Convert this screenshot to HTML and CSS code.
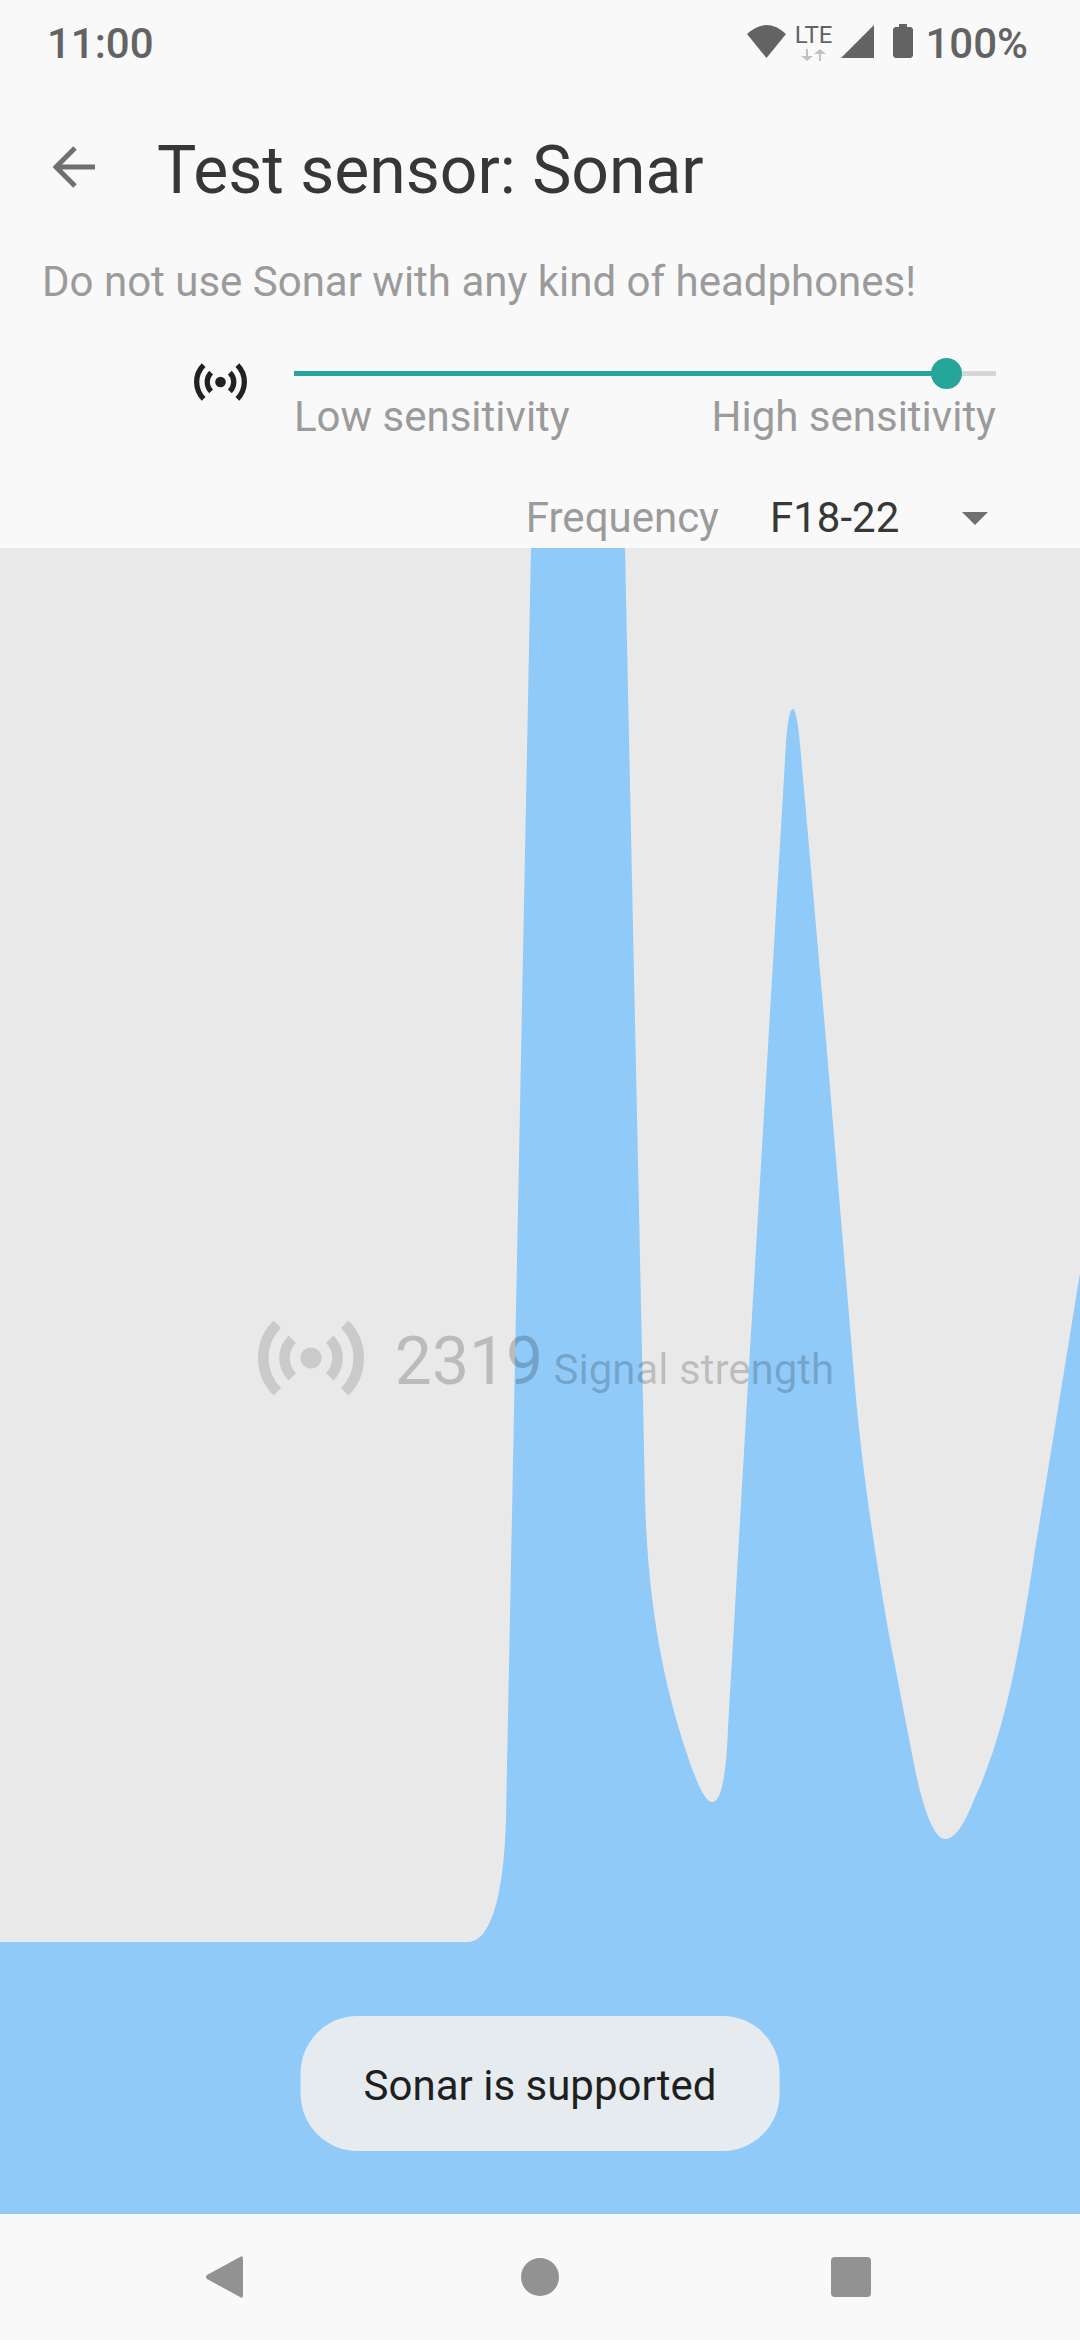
FILE: index.html
```html
<!DOCTYPE html>
<html lang="en">
<head>
<meta charset="utf-8">
<meta name="viewport" content="width=device-width, initial-scale=1">
<title>Test sensor: Sonar</title>
<link rel="stylesheet" href="styles.css">
</head>
<body>
<div class="screen">
  <div class="status-bar">
    <span>11:00</span>
    <div class="status-icons">
      <svg class="wifi" width="39" height="33" viewBox="0 0 39 33" aria-hidden="true"><path d="M0 9Q19.500-9 39 9L19.500 33Z"/></svg>
      <div class="network">
        <span class="network-type">LTE</span>
        <svg width="25" height="12" viewBox="0 0 25 12" aria-hidden="true"><path d="M5 0h2v7h5l-6 5-6-5h5zM18 12h2V5h5l-6-5-6 5h5z"/></svg>
      </div>
      <svg class="signal" width="33" height="33" viewBox="0 0 33 33" aria-hidden="true"><path d="M33 0V33H0Z"/></svg>
      <svg class="battery" width="20" height="34" viewBox="0 0 20 34" aria-hidden="true"><path d="M6 0h8v3h4l2 2v27l-2 2H2l-2-2V5l2-2h4z"/></svg>
      <span>100%</span>
    </div>
  </div>

  <header class="app-bar">
    <button class="back" type="button" aria-label="Back">
      <svg width="42" height="42" viewBox="0 0 42 42" aria-hidden="true"><path d="M42 21H4M22 2L3 21L22 40" fill="none" stroke="currentColor" stroke-width="5"/></svg>
    </button>
    <h1>Test sensor: Sonar</h1>
  </header>

  <main class="content">
    <p class="warning">Do not use Sonar with any kind of headphones!</p>

    <div class="sensitivity">
      <svg class="sonar-icon" viewBox="-5 -4 10 8" aria-hidden="true">
        <circle r="1" fill="currentColor"/>
        <path d="M-1.768-1.768A2.500 2.500 0 0 0-1.768 1.768M1.768-1.768A2.500 2.500 0 0 1 1.768 1.768M-3.182-3.182A4.500 4.500 0 0 0-3.182 3.182M3.182-3.182A4.500 4.500 0 0 1 3.182 3.182" fill="none" stroke="currentColor"/>
      </svg>
      <div class="slider">
        <input type="range" min="0" max="100" value="95" aria-label="Sensitivity">
        <div class="slider-labels"><span>Low sensitivity</span><span>High sensitivity</span></div>
      </div>
    </div>

    <div class="frequency">
      <label for="frequency">Frequency</label>
      <div class="spinner">
        <select id="frequency"><option>F18-22</option></select>
        <svg width="26" height="13" viewBox="0 0 26 13" aria-hidden="true"><path d="M0 0H26L13 13Z"/></svg>
      </div>
    </div>

    <section class="chart">
      <svg class="curve" viewBox="0 0 1080 1666" preserveAspectRatio="none" aria-hidden="true">
        <path d="M0 1394H468C490 1394 504 1350 506 1270L531 0H625L643 852L645 950C648 1070 668 1150 688 1209Q703 1254 712 1254C720 1254 726 1235 728 1180L747 852L786 195C788 170 790 161 793 161C796 161 799 180 802 219L826 492L855 839C862 922 877 1020 890 1092L912 1206C921 1255 933 1291 945 1291C957 1291 967 1270 976 1247C1004 1187 1020 1103 1035 1002L1080 725V1666H0Z"/>
      </svg>
      <div class="reading">
        <svg class="sonar-icon" viewBox="-5 -4 10 8" aria-hidden="true">
          <circle r="1" fill="currentColor"/>
          <path d="M-1.768-1.768A2.500 2.500 0 0 0-1.768 1.768M1.768-1.768A2.500 2.500 0 0 1 1.768 1.768M-3.182-3.182A4.500 4.500 0 0 0-3.182 3.182M3.182-3.182A4.500 4.500 0 0 1 3.182 3.182" fill="none" stroke="currentColor"/>
        </svg>
        <p><span class="value">2319</span> Signal strength</p>
      </div>
      <div class="toast" role="status">Sonar is supported</div>
    </section>
  </main>

  <nav class="nav-bar">
    <button type="button" aria-label="Back"><svg class="nav-back" width="45" height="42" viewBox="0 0 45 42" aria-hidden="true"><path d="M34 1Q37-1 37 3V39Q37 43 34 41L1 23Q-1 21 1 19Z"/></svg></button>
    <button type="button" aria-label="Home"><svg width="38" height="38" viewBox="0 0 38 38" aria-hidden="true"><circle cx="19" cy="19" r="19"/></svg></button>
    <button type="button" aria-label="Overview"><svg width="40" height="40" viewBox="0 0 40 40" aria-hidden="true"><rect width="40" height="40" rx="4"/></svg></button>
  </nav>
</div>
</body>
</html>
```
FILE: styles.css
```css
* {
  box-sizing: border-box;
}

body {
  margin: 0;
  background: #f9f9f9;
  color: #9b9b9b;
  font: 42px/56px Roboto, sans-serif;
}

h1,
p {
  margin: 0;
}

svg {
  display: block;
  flex: none;
  fill: currentColor;
}

button {
  display: grid;
  place-items: center;
  padding: 0;
  border: 0;
  background: none;
  color: inherit;
}

.screen {
  display: flex;
  flex-direction: column;
  min-height: 100vh;
}

.status-bar {
  display: flex;
  justify-content: space-between;
  align-items: center;
  height: 88px;
  padding: 0 52px 0 47px;
  color: #636363;
  font-weight: 500;
}

.status-icons {
  display: flex;
  align-items: center;
}

.wifi,
.signal,
.battery {
  margin-bottom: 6px;
}

.network {
  display: flex;
  flex-direction: column;
  align-items: center;
  gap: 2px;
  margin: 0 9px;
  padding-bottom: 4px;
}

.network svg {
  color: #c2c2c2;
}

.network-type {
  font-size: 24px;
  font-weight: 400;
  line-height: 24px;
}

.battery {
  margin-left: 19px;
  margin-right: 12px;
}

.app-bar {
  display: flex;
  align-items: center;
  gap: 62px;
  height: 166px;
  padding: 0 53px;
  color: #373737;
}

.app-bar h1 {
  font-size: 66px;
  font-weight: 400;
  line-height: 80px;
}

.back {
  margin-bottom: 8px;
  color: #707070;
}

.content {
  display: flex;
  flex: 1;
  flex-direction: column;
}

.warning {
  padding: 0 42px;
}

.sensitivity {
  display: flex;
  gap: 47px;
  padding: 48px 84px 0 194px;
}

.sensitivity .sonar-icon {
  width: 53px;
  height: 48px;
  color: #212121;
}

.slider {
  flex: 1;
}

.slider input {
  display: block;
  width: 100%;
  height: 31px;
  margin: 0;
  appearance: none;
  background: linear-gradient(90deg, #26a69a 93%, #d6d6d6 93%) center / 100% 5px no-repeat;
}

.slider input::-webkit-slider-thumb {
  width: 31px;
  height: 31px;
  appearance: none;
  border-radius: 50%;
  background: #26a69a;
}

.slider-labels {
  display: flex;
  justify-content: space-between;
}

.frequency {
  display: flex;
  justify-content: flex-end;
  align-items: center;
  gap: 51px;
  height: 60px;
  margin-top: 43px;
  padding-right: 84px;
}

.spinner {
  display: grid;
  align-items: center;
  width: 226px;
  color: #707070;
}

.spinner select,
.spinner svg {
  grid-area: 1 / 1;
}

.spinner select {
  width: 100%;
  padding: 0;
  border: 0;
  appearance: none;
  background: none;
  color: #373737;
  font: inherit;
}

.spinner svg {
  justify-self: end;
  margin-right: 8px;
  pointer-events: none;
}

.chart {
  position: relative;
  flex: 1;
  min-height: 600px;
  background: #e9e9e9;
}

.curve {
  position: absolute;
  inset: 0;
  width: 100%;
  height: 100%;
  color: #90caf9;
}

.reading {
  position: absolute;
  inset: 0 0 30px;
  display: flex;
  justify-content: center;
  align-items: center;
  gap: 31px;
  padding-left: 12px;
  color: rgba(0, 0, 0, 0.195);
}

.reading .sonar-icon {
  width: 106px;
  height: 86px;
  margin-bottom: 16px;
  color: rgba(0, 0, 0, 0.13);
}

.value {
  font-size: 66px;
}

.toast {
  position: absolute;
  bottom: 63px;
  left: 50%;
  padding: 42px 63px 37px;
  border-radius: 57px;
  background: #e5ebef;
  color: #1f1f1f;
  white-space: nowrap;
  transform: translateX(-50%);
}

.nav-bar {
  display: grid;
  grid-template-columns: repeat(3, 1fr);
  height: 126px;
  padding: 0 73px;
  color: #929292;
}
```
